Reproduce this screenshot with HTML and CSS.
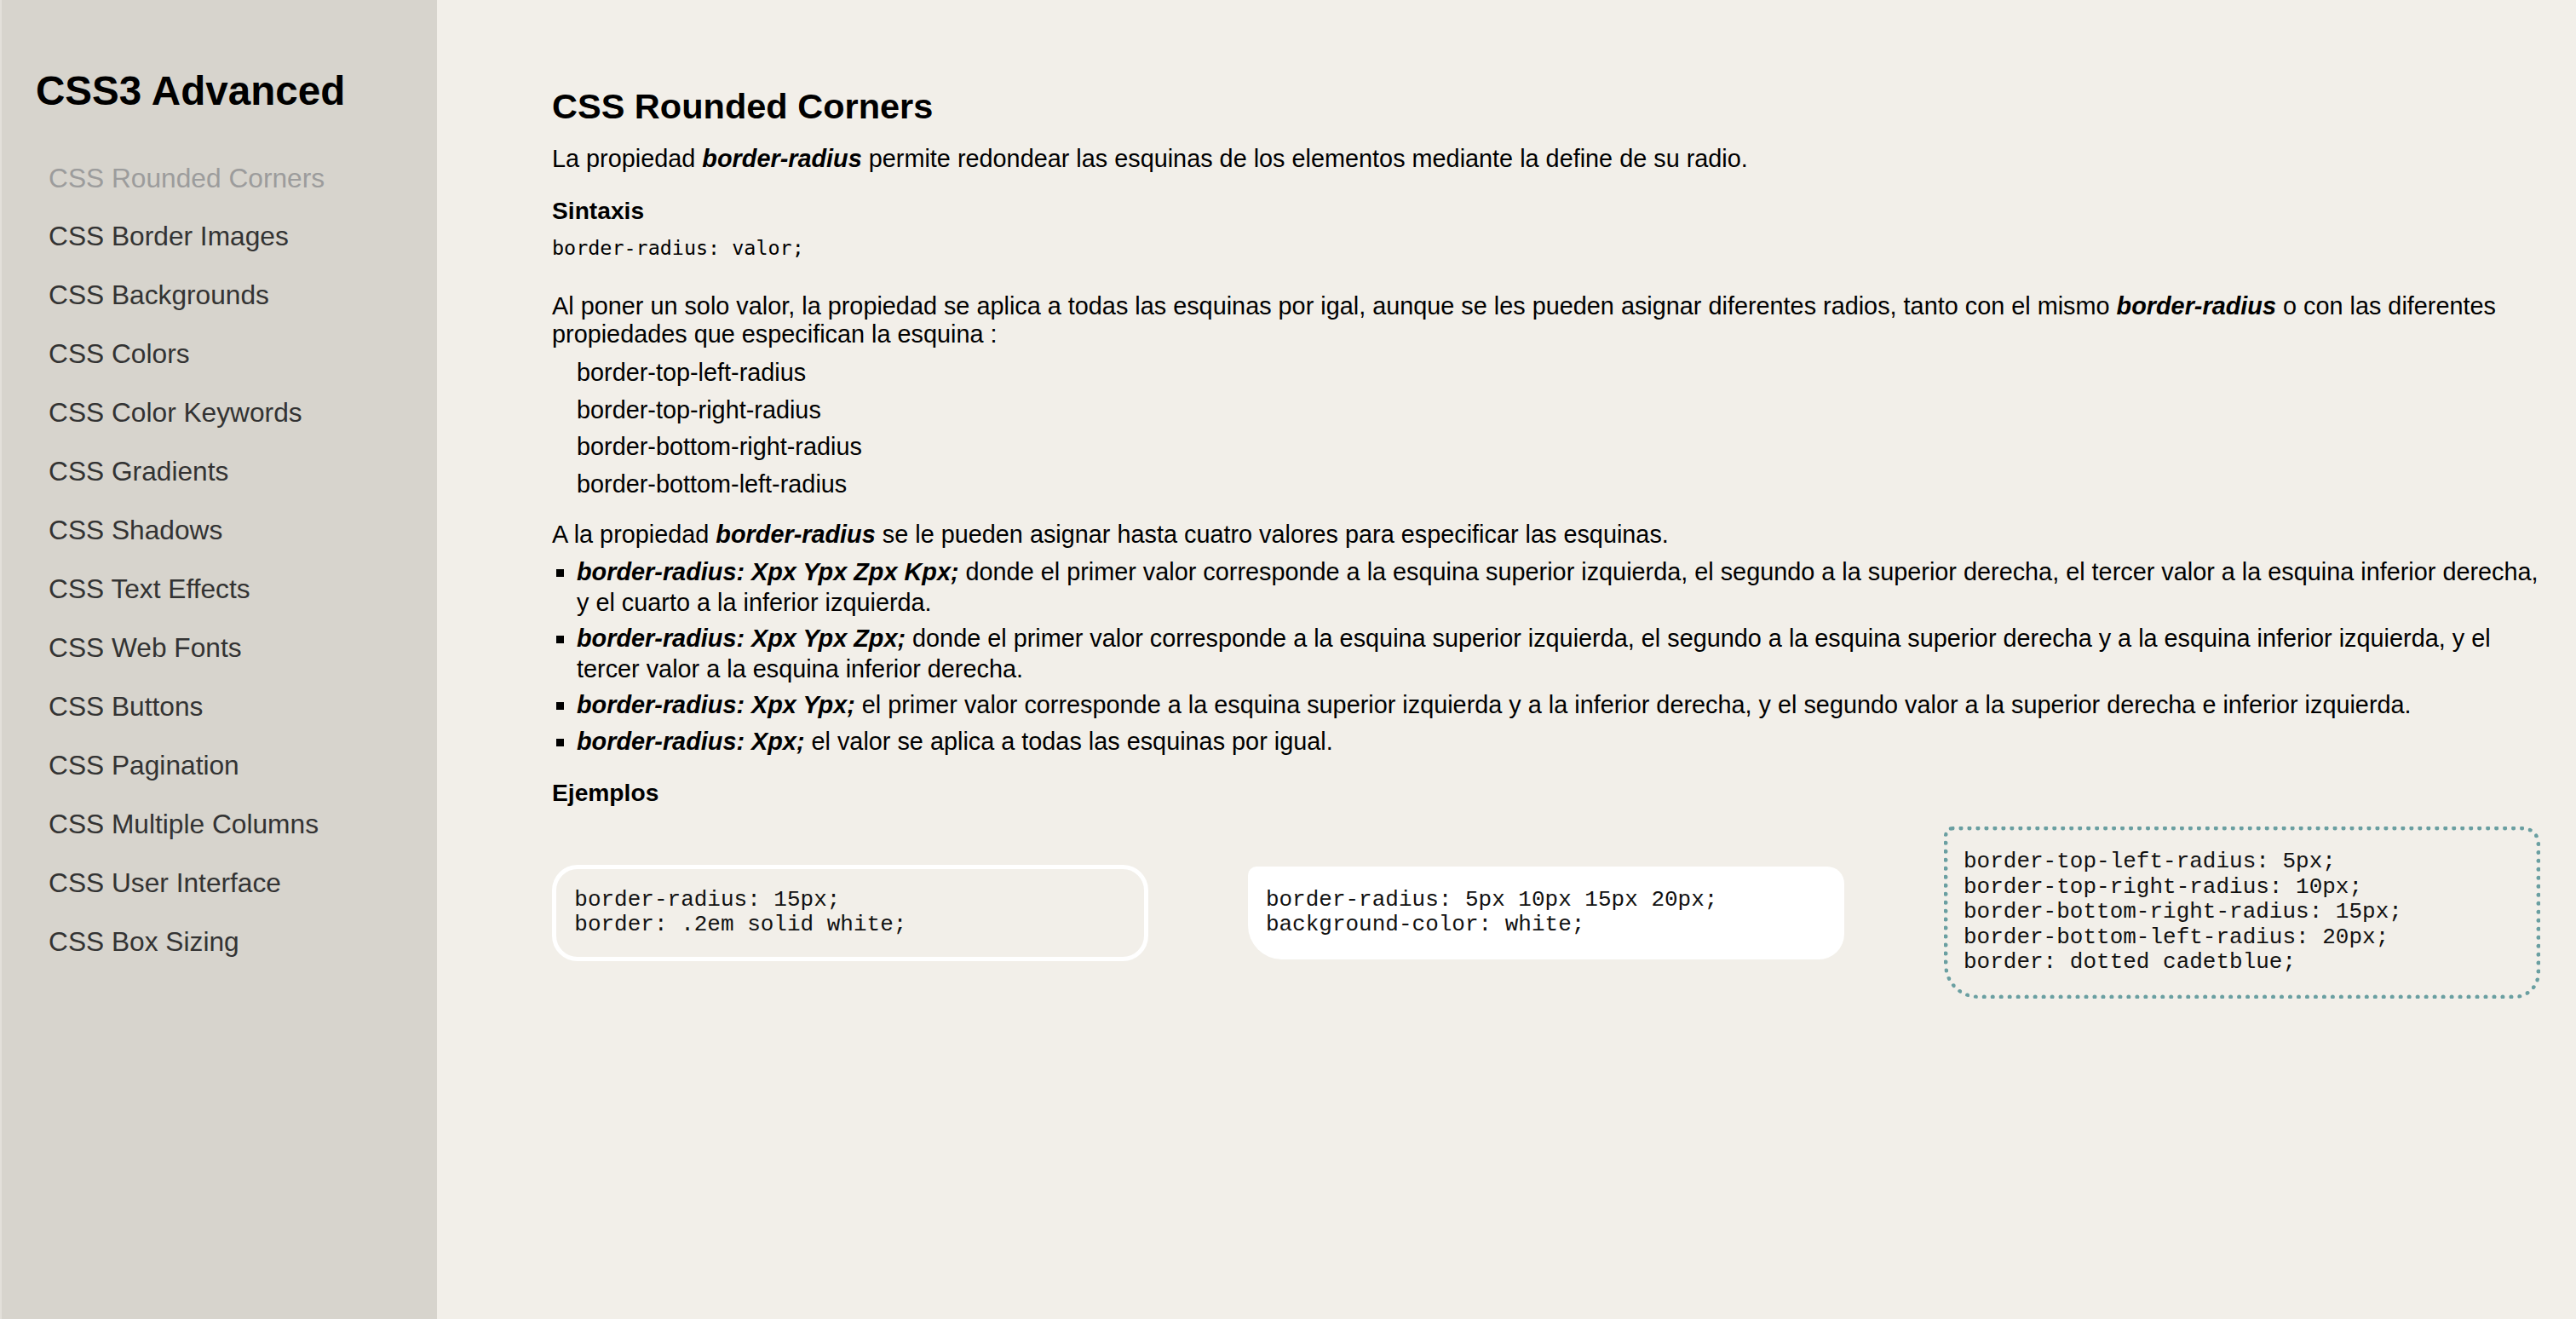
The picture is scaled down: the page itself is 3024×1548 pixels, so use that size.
FILE: index.html
```html
<!DOCTYPE html>
<html lang="es">
<head>
<meta charset="utf-8">
<title>CSS Rounded Corners</title>
<link rel="stylesheet" href="styles.css">
</head>
<body>
<aside class="sidebar">
  <h1 class="brand">CSS3 Advanced</h1>
  <ul class="nav">
    <li><a class="active" href="#">CSS Rounded Corners</a></li>
    <li><a href="#">CSS Border Images</a></li>
    <li><a href="#">CSS Backgrounds</a></li>
    <li><a href="#">CSS Colors</a></li>
    <li><a href="#">CSS Color Keywords</a></li>
    <li><a href="#">CSS Gradients</a></li>
    <li><a href="#">CSS Shadows</a></li>
    <li><a href="#">CSS Text Effects</a></li>
    <li><a href="#">CSS Web Fonts</a></li>
    <li><a href="#">CSS Buttons</a></li>
    <li><a href="#">CSS Pagination</a></li>
    <li><a href="#">CSS Multiple Columns</a></li>
    <li><a href="#">CSS User Interface</a></li>
    <li><a href="#">CSS Box Sizing</a></li>
  </ul>
</aside>
<main class="content">
  <h2 class="page-title">CSS Rounded Corners</h2>
  <p class="lead">La propiedad <b><i>border-radius</i></b> permite redondear las esquinas de los elementos mediante la define de su radio.</p>
  <h3 class="section">Sintaxis</h3>
  <div class="syntax">border-radius: valor;</div>
  <p class="para para-gap">Al poner un solo valor, la propiedad se aplica a todas las esquinas por igal, aunque se les pueden asignar diferentes radios, tanto con el mismo <b><i>border-radius</i></b> o con las diferentes propiedades que especifican la esquina :</p>
  <ul class="corners">
    <li>border-top-left-radius</li>
    <li>border-top-right-radius</li>
    <li>border-bottom-right-radius</li>
    <li>border-bottom-left-radius</li>
  </ul>
  <p class="para para-gap2">A la propiedad <b><i>border-radius</i></b> se le pueden asignar hasta cuatro valores para especificar las esquinas.</p>
  <ul class="values">
    <li><b><i>border-radius: Xpx Ypx Zpx Kpx;</i></b> donde el primer valor corresponde a la esquina superior izquierda, el segundo a la superior derecha, el tercer valor a la esquina inferior derecha, y el cuarto a la inferior izquierda.</li>
    <li><b><i>border-radius: Xpx Ypx Zpx;</i></b> donde el primer valor corresponde a la esquina superior izquierda, el segundo a la esquina superior derecha y a la esquina inferior izquierda, y el tercer valor a la esquina inferior derecha.</li>
    <li><b><i>border-radius: Xpx Ypx;</i></b> el primer valor corresponde a la esquina superior izquierda y a la inferior derecha, y el segundo valor a la superior derecha e inferior izquierda.</li>
    <li><b><i>border-radius: Xpx;</i></b> el valor se aplica a todas las esquinas por igual.</li>
  </ul>
  <h3 class="section section-examples">Ejemplos</h3>
  <div class="examples">
    <pre class="ex ex-border">border-radius: 15px;
border: .2em solid white;</pre>
    <pre class="ex ex-fill">border-radius: 5px 10px 15px 20px;
background-color: white;</pre>
    <pre class="ex ex-dotted">border-top-left-radius: 5px;
border-top-right-radius: 10px;
border-bottom-right-radius: 15px;
border-bottom-left-radius: 20px;
border: dotted cadetblue;</pre>
  </div>
</main>
</body>
</html>
```
FILE: styles.css
```css
* { box-sizing: border-box; }

html, body {
  margin: 0;
  padding: 0;
}

body {
  display: flex;
  min-height: 100vh;
  font-family: "Liberation Sans", Arial, Helvetica, sans-serif;
  background: #f2efe9;
  color: #000;
}

.sidebar {
  flex: none;
  width: 513px;
  background: #d7d4cd;
  border-left: 2px solid #e3e0da;
  padding: 79px 0 0 40px;
}

.brand {
  margin: 0;
  font-size: 47.6px;
  line-height: 56px;
  font-weight: bold;
  color: #000;
}

.nav {
  list-style: none;
  margin: 39.5px 0 0;
  padding: 0 0 0 15px;
}

.nav li {
  font-size: 31.7px;
  line-height: 68.95px;
}

.nav a {
  color: #333;
  text-decoration: none;
}

.nav a.active {
  color: #9c9c9c;
}

.content {
  flex: 1;
  min-width: 0;
  padding: 101px 38px 0 135px;
  font-size: 28.83px;
  line-height: 32.2px;
}

.page-title {
  margin: 0;
  font-size: 41.5px;
  line-height: 48px;
  font-weight: bold;
}

.lead {
  margin: 21px 0 0;
}

.section {
  margin: 28.3px 0 0;
  font-size: 28.2px;
  line-height: 32.2px;
  font-weight: bold;
}

.syntax {
  margin-top: 14.2px;
  font-family: "DejaVu Sans Mono", Menlo, monospace;
  font-size: 23.4px;
  line-height: 28px;
}

.para {
  margin: 0;
  line-height: 32.6px;
}

.para-gap { margin-top: 38.6px; }
.para-gap2 { margin-top: 21px; }

.corners {
  list-style: none;
  margin: 7.5px 0 0;
  padding: 0 0 0 29px;
}

.corners li {
  line-height: 43.5px;
}

.values {
  list-style: square;
  margin: 9px 0 0;
  padding: 0 0 0 29px;
}

.values li {
  line-height: 36px;
}

.values li + li {
  margin-top: 6.3px;
}

.section-examples {
  margin-top: 26px;
}

.examples {
  display: flex;
  justify-content: space-between;
  align-items: center;
  margin-top: 24.5px;
  margin-right: 4px;
}

.ex {
  width: 30%;
  margin: 0;
  font-family: "Liberation Mono", "Courier New", monospace;
  font-size: 26px;
  line-height: 29.5px;
  color: #111;
  white-space: pre;
}

.ex-border {
  border: .2em solid #fff;
  border-radius: 30px;
  padding: .85em .82em;
}

.ex-fill {
  background: #fff;
  border-radius: 10px 20px 30px 40px;
  padding: 25px 21px;
}

.ex-dotted {
  border: .2em dotted #6a9fa1;
  border-radius: 10px 20px 30px 40px;
  padding: .85em .7em;
}
```
